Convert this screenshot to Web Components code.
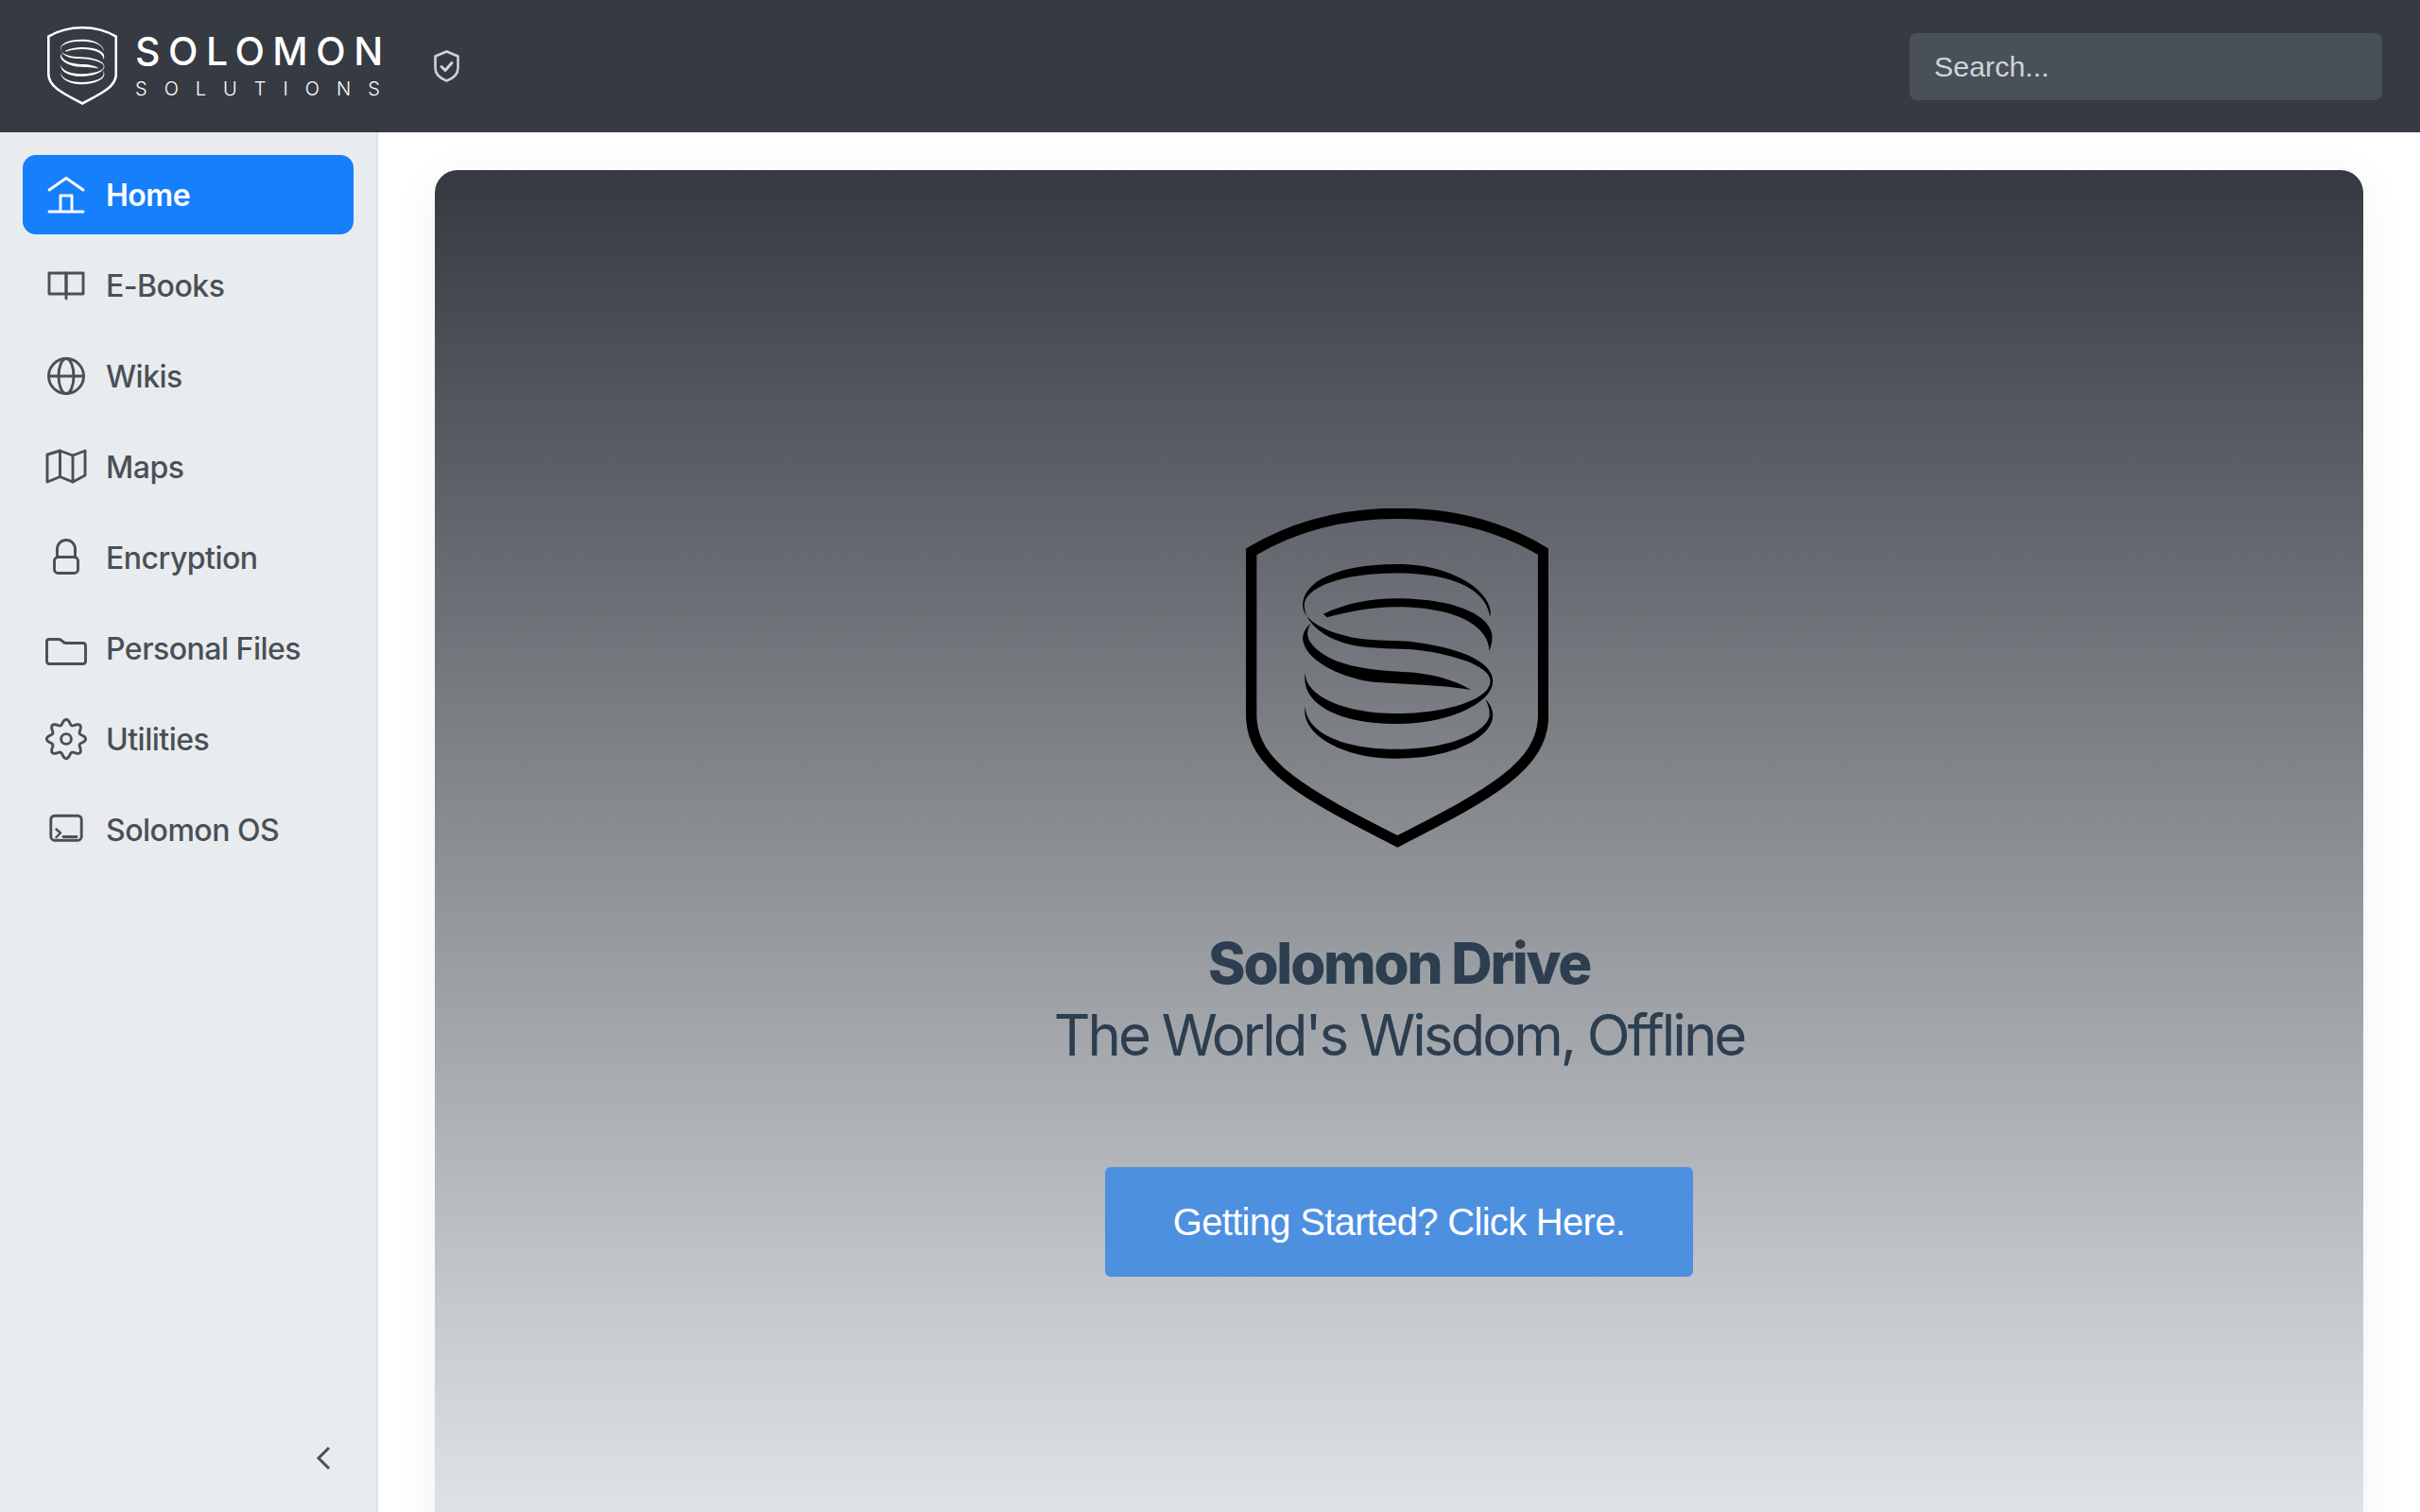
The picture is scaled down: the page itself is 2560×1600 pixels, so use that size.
<!doctype html>
<html>
<head>
<meta charset="utf-8">
<title>Solomon Drive</title>
<style>
html, body { margin: 0; height: 100%; }
body { font-family: Inter, "Liberation Sans", sans-serif; overflow: hidden; }
</style>
</head>
<body>
<app-shell>
  <top-bar></top-bar>
  <side-nav>
    <nav-item icon="home" active>Home</nav-item>
    <nav-item icon="book">E-Books</nav-item>
    <nav-item icon="globe">Wikis</nav-item>
    <nav-item icon="map">Maps</nav-item>
    <nav-item icon="lock">Encryption</nav-item>
    <nav-item icon="folder">Personal Files</nav-item>
    <nav-item icon="gear">Utilities</nav-item>
    <nav-item icon="terminal">Solomon OS</nav-item>
  </side-nav>
  <hero-card></hero-card>
</app-shell>

<script>
// spiral shield logo, traced at 3x so the viewBox is 115 85 958 1075
const shieldLogo = `
  <path d="M132 222C270 140 430 101 595 101C760 101 920 140 1057 222V740C1057 900 890 990 595 1140C300 990 132 900 132 740Z" fill="none" stroke="currentColor" stroke-width="34"/>
  <g fill="currentColor">
    <path d="M888 428C905 370 800 262 590 262C400 262 295 320 295 392C295 440 370 480 470 497C530 507 590 500 660 510C790 528 897 570 897 632C897 700 760 768 590 768C420 768 285 710 303 605C300 680 430 735 590 735C750 735 889 690 889 632C889 585 780 548 650 533C590 527 530 532 460 520C360 500 300 445 300 392C300 335 420 290 590 290C760 290 874 335 888 428Z"/>
    <path d="M360 420C430 385 510 370 590 370C780 370 892 425 895 490C895 510 890 525 886 537C884 462 790 397 590 397C510 397 440 412 372 430Z"/>
    <path d="M320 450C296 468 292 495 297 510C315 575 430 625 520 635C600 642 700 640 828 660C770 625 690 605 610 603C520 597 430 590 365 550C320 520 295 490 320 450Z"/>
    <path d="M303 712C285 800 420 878 590 878C770 878 897 810 897 740C897 720 885 700 873 690C885 710 888 730 886 745C870 800 750 848 590 848C430 848 305 800 303 712Z"/>
  </g>
`;

function gear_path() {
  const points = [];
  for (let i = 0; i < 96; i++) {
    const angle = (i / 96) * Math.PI * 2;
    const radius = 18 + 2.7 * Math.cos(angle * 8);
    const x = 22 + radius * Math.sin(angle);
    const y = 22 - radius * Math.cos(angle);
    points.push(`${x.toFixed(2)} ${y.toFixed(2)}`);
  }
  return `M${points.join("L")}Z`;
}

// all icons sit in a 44x44 box, stroke comes from the svg
const icons = {
  home: `<path d="M4 17L22 4.5L40 17"/><path d="M16 39V23H28V39"/><path d="M4 40H40"/>`,
  book: `<path d="M4 9H22V31H4Z"/><path d="M22 9H40V31H22Z"/><path d="M22 31V36"/>`,
  globe: `<circle cx="22" cy="22" r="18.5"/><path d="M3.5 22H40.5"/><ellipse cx="22" cy="22" rx="8" ry="18.5"/>`,
  map: `<path d="M2 9L15.5 5L29 10L42 5V31L29 38L15.5 32.5L2 38Z"/><path d="M15.5 5V32.5"/><path d="M29 10V38"/>`,
  lock: `<rect x="9.5" y="21.5" width="25" height="17" rx="4"/><path d="M12.5 21.5V13A9.5 9.5 0 0 1 31.5 13V21.5"/>`,
  folder: `<path d="M1.5 15C1.5 13.5 2.5 12.5 4 12.5H14C16 12.5 17 13.5 18 14.5C19 15.8 20 16.5 22 16.5H39.5C41.5 16.5 42.5 17.5 42.5 19.5V35.5C42.5 37.5 41.5 38.5 39.5 38.5H4.5C2.5 38.5 1.5 37.5 1.5 35.5Z"/>`,
  gear: `<path d="${gear_path()}"/><circle cx="22" cy="22" r="5.4"/>`,
  terminal: `<rect x="5.8" y="7.2" width="32.4" height="26" rx="4"/><path d="M11.5 21.5L16 25.5L11.5 30" stroke-width="2.4"/><path d="M19 29.5H33"/>`,
};

class AppShell extends HTMLElement {
  constructor() {
    super();
    this.attachShadow({ mode: "open" });
    this.shadowRoot.innerHTML = `<style>
:host {
  display: grid;
  grid-template-columns: 400px 1fr;
  grid-template-rows: 140px 1460px;
  width: 2560px;
  height: 1600px;
  overflow: hidden;
  background: #fff;
}
::slotted(top-bar) { grid-column: 1 / -1; }
</style><slot></slot>`;
  }
}

class TopBar extends HTMLElement {
  constructor() {
    super();
    this.attachShadow({ mode: "open" });
    this.shadowRoot.innerHTML = `<style>
:host {
  display: flex;
  align-items: center;
  background: #363a42;
  padding: 0 40px 0 50px;
  color: #fff;
}
.logo { width: 74px; height: 85px; color: #fff; flex: none; margin-top: -1px; }
.words { margin-left: 19px; display: flex; flex-direction: column; width: 261px; margin-top: -3px; }
.name { font-size: 41px; font-weight: 500; line-height: 46px; letter-spacing: 8.5px; white-space: nowrap; }
.sub { font-size: 20px; font-weight: 300; line-height: 26px; letter-spacing: 18px; white-space: nowrap; margin-top: 4px; }
.badge { width: 27px; height: 34px; margin-left: 55px; color: #ced4da; flex: none; }
.search {
  margin-left: auto;
  width: 500px;
  height: 71px;
  box-sizing: border-box;
  padding: 0 26px;
  display: flex;
  align-items: center;
  background: #495057;
  border-radius: 8px;
  color: #ced4da;
  font-family: "Liberation Sans", sans-serif;
  font-size: 30.4px;
}
</style>
<svg class="logo" viewBox="115 85 958 1075">${shieldLogo}</svg>
<div class="words"><span class="name">SOLOMON</span><span class="sub">SOLUTIONS</span></div>
<svg class="badge" viewBox="0 0 27 34" fill="none" stroke="currentColor" stroke-width="2.6" stroke-linejoin="round" stroke-linecap="round">
  <path d="M13.5 1.5L25.5 6.5V19C25.5 25.5 20 30 13.5 32.5C7 30 1.5 25.5 1.5 19V6.5Z"/>
  <path d="M8 17.5L12 21.5L19 13.5" stroke-width="3"/>
</svg>
<div class="search">Search...</div>`;
  }
}

class SideNav extends HTMLElement {
  constructor() {
    super();
    this.attachShadow({ mode: "open" });
    this.shadowRoot.innerHTML = `<style>
:host {
  display: flex;
  flex-direction: column;
  box-sizing: border-box;
  background: #e9ecef;
  border-right: 2px solid #dee2e6;
  padding: 24px 24px 44px 24px;
}
.list { display: flex; flex-direction: column; gap: 12px; }
.collapse { margin-top: auto; align-self: flex-end; margin-right: 24px; width: 16px; height: 26px; color: #495057; }
</style>
<div class="list"><slot></slot></div>
<svg class="collapse" viewBox="0 0 16 26" fill="none" stroke="currentColor" stroke-width="3"><path d="M14 2L3 13L14 24"/></svg>`;
  }
}

class NavItem extends HTMLElement {
  constructor() {
    super();
    this.attachShadow({ mode: "open" });
  }

  connectedCallback() {
    const icon = icons[this.getAttribute("icon")];
    this.shadowRoot.innerHTML = `<style>
:host {
  display: flex;
  align-items: center;
  gap: 20px;
  height: 84px;
  box-sizing: border-box;
  padding: 0 24px;
  border-radius: 14px;
  color: #495057;
  font-size: 32px;
  font-weight: 500;
  letter-spacing: -0.5px;
}
:host([active]) { background: #167ffc; color: #fff; font-weight: 600; }
svg { width: 44px; height: 44px; flex: none; }
</style>
<svg viewBox="0 0 44 44" fill="none" stroke="currentColor" stroke-width="2.9" stroke-linecap="round" stroke-linejoin="round">${icon}</svg>
<span><slot></slot></span>`;
  }
}

class HeroCard extends HTMLElement {
  constructor() {
    super();
    this.attachShadow({ mode: "open" });
    this.shadowRoot.innerHTML = `<style>
:host {
  display: block;
  margin: 40px 60px 0 60px;
  height: 1500px;
  box-sizing: border-box;
  padding-top: 358px;
  border-radius: 24px;
  background: linear-gradient(180deg, #353a41 0%, #e9ecef 100%);
  box-shadow: 0 8px 48px rgba(0,0,0,.06);
  text-align: center;
  color: #2c3e50;
}
.logo { display: block; width: 320px; height: 359px; margin: 0 auto; color: #000; transform: translateX(-2px); }
h1 { margin: 84px 0 0; font-size: 60px; line-height: 76px; font-weight: 800; letter-spacing: -2.2px; }
h2 { margin: 0; font-size: 60px; line-height: 76px; font-weight: 400; letter-spacing: -3px; }
.cta {
  display: flex;
  align-items: center;
  justify-content: center;
  width: 622px;
  height: 116px;
  margin: 102px auto 0;
  background: #4d90e0;
  border-radius: 6px;
  color: #fff;
  font-family: "Liberation Sans", sans-serif;
  font-size: 40px;
  letter-spacing: -0.7px;
}
</style>
<svg class="logo" viewBox="115 85 958 1075">${shieldLogo}</svg>
<h1>Solomon Drive</h1>
<h2>The World's Wisdom, Offline</h2>
<div class="cta">Getting Started? Click Here.</div>`;
  }
}

customElements.define("app-shell", AppShell);
customElements.define("top-bar", TopBar);
customElements.define("side-nav", SideNav);
customElements.define("nav-item", NavItem);
customElements.define("hero-card", HeroCard);
</script>
</body>
</html>
